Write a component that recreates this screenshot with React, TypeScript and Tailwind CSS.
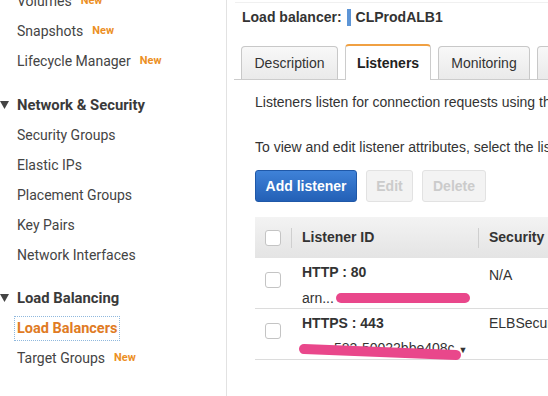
const side = "font-['Roboto','Liberation_Sans',sans-serif]";
const main = "font-['Liberation_Sans','Arial',sans-serif]";

const NewBadge = () => (
  <span className="ml-[9px] text-[11px] font-bold text-[#ec8f24]">New</span>
);

const SideItem = ({ label, isNew }: { label: string; isNew?: boolean }) => (
  <div className="flex h-[30px] items-center pl-[17px] text-[14px] text-[#444]">
    {label}
    {isNew && <NewBadge />}
  </div>
);

const SideHeader = ({ label, className }: { label: string; className?: string }) => (
  <div className={`flex h-[30px] items-center text-[14.8px] font-bold text-[#3a3a3a] ${className ?? ""}`}>
    <span className="w-[17px]">
      <svg width="9" height="8" viewBox="0 0 9 8">
        <path d="M0 0 H9 L4.5 8 Z" fill="#444" />
      </svg>
    </span>
    {label}
  </div>
);

const Checkbox = () => (
  <div className="h-[16px] w-[16px] rounded-[3px] border border-[#c4c4c4] bg-white" />
);

const Tab = ({ label, active, w }: { label: string; active?: boolean; w: string }) =>
  active ? (
    <div
      className={`${w} -mb-px flex h-[36px] items-center justify-center rounded-t-[4px] border border-b-0 border-[#ccc] border-t-2 border-t-[#f0a042] bg-white text-[14px] font-bold text-[#222]`}
    >
      {label}
    </div>
  ) : (
    <div
      className={`${w} flex h-[33px] shrink-0 items-center justify-center rounded-t-[4px] border border-b-0 border-[#c8c8c8] bg-gradient-to-b from-[#f8f8f8] to-[#eaeaea] text-[14px] text-[#333]`}
    >
      {label}
    </div>
  );

export default function App() {
  return (
    <div className="flex h-[396px] w-[548px] overflow-hidden bg-white">
      {/* sidebar */}
      <div className={`w-[227px] shrink-0 border-r border-[#e2e2e2] ${side}`}>
        <div className="-mt-[14px]">
          <SideItem label="Volumes" isNew />
          <SideItem label="Snapshots" isNew />
          <SideItem label="Lifecycle Manager" isNew />
          <SideHeader label="Network & Security" className="mt-[14px]" />
          <SideItem label="Security Groups" />
          <SideItem label="Elastic IPs" />
          <SideItem label="Placement Groups" />
          <SideItem label="Key Pairs" />
          <SideItem label="Network Interfaces" />
          <SideHeader label="Load Balancing" className="mt-[13px]" />
          <div className="flex h-[30px] items-center pl-[14px] pt-[1px]">
            <span className="border border-dotted border-[#8fb8dd] px-[2px] py-[1px] text-[14.5px] font-bold text-[#e07b24]">
              Load Balancers
            </span>
          </div>
          <SideItem label="Target Groups" isNew />
          <SideHeader label="Auto Scaling" className="mt-[14px]" />
        </div>
      </div>

      {/* main */}
      <div className={`min-w-0 flex-1 overflow-hidden whitespace-nowrap ${main}`}>
        <div className="ml-[8px] h-[3px] border-b border-[#f0f0f0]" />
        <div className="flex h-[28px] items-center pl-[15px] text-[14px] font-bold text-[#333]">
          Load balancer:
          <span className="ml-[5px] mr-[5px] h-[17px] w-[4px] bg-[#5d95d6]" />
          CLProdALB1
        </div>

        <div className="ml-[7px] mt-[13px] flex items-end gap-[7px] border-b border-[#ccc] pl-[7px]">
          <Tab label="Description" w="w-[97px] shrink-0" />
          <Tab label="Listeners" active w="w-[86px] shrink-0" />
          <Tab label="Monitoring" w="w-[92px] shrink-0" />
          <Tab label="Tags" w="w-[60px] shrink-0" />
        </div>

        <div className="pl-[28px] text-[14px] text-[#333]">
          <div className="mt-[12px] leading-[20px]">
            Listeners listen for connection requests using the protocol and port you configure.
          </div>
          <div className="mt-[25px] leading-[20px]">
            To view and edit listener attributes, select the listener.
          </div>

          <div className="mt-[13px] flex gap-[9px]">
            <div className="flex h-[32px] w-[102px] items-center justify-center rounded-[3px] border border-[#1f58a8] bg-gradient-to-b from-[#3f82d8] to-[#2360b6] font-bold text-white">
              Add listener
            </div>
            <div className="flex h-[32px] w-[47px] items-center justify-center rounded-[3px] border border-[#e2e2e2] bg-[#f3f3f3] font-bold text-[#cbcbcb]">
              Edit
            </div>
            <div className="flex h-[32px] w-[64px] items-center justify-center rounded-[3px] border border-[#e2e2e2] bg-[#f3f3f3] font-bold text-[#cbcbcb]">
              Delete
            </div>
          </div>

          {/* table */}
          <div className="mt-[15px] w-[400px]">
            <div className="grid h-[41px] grid-cols-[36px_187px_1fr] items-center bg-gradient-to-b from-[#f3f3f3] to-[#e4e4e4] font-bold text-[#333]">
              <div className="flex h-full items-center pl-[10px]">
                <Checkbox />
              </div>
              <div className="flex h-[20px] items-center border-l border-[#cfcfcf] pl-[10px]">Listener ID</div>
              <div className="flex h-[20px] items-center border-l border-[#cfcfcf] pl-[10px]">Security policy</div>
            </div>

            <div className="grid h-[51px] grid-cols-[36px_187px_1fr] border-b border-[#dcdcdc]">
              <div className="pl-[10px] pt-[14px]">
                <Checkbox />
              </div>
              <div className="pl-[11px] pt-[5px]">
                <div className="font-bold leading-[18px]">HTTP : 80</div>
                <div className="mt-[8px] flex items-center leading-[18px]">
                  arn...
                  <span className="ml-[2px] h-[10px] w-[134px] rounded-full bg-[#e9478b]" />
                </div>
              </div>
              <div className="pl-[11px] pt-[8px] leading-[18px]">N/A</div>
            </div>

            <div className="relative grid h-[51px] grid-cols-[36px_187px_1fr] border-b border-[#dcdcdc]">
              <div className="pl-[10px] pt-[14px]">
                <Checkbox />
              </div>
              <div className="pl-[11px] pt-[5px]">
                <div className="font-bold leading-[18px]">HTTPS : 443</div>
                <div className="mt-[7px] leading-[18px]">
                  arn...583-50022bbe408c <span className="text-[9px]">▼</span>
                </div>
              </div>
              <div className="pl-[11px] pt-[5px] leading-[18px]">ELBSecurityPolicy-2016-08</div>
              <svg className="absolute left-0 top-0" width="220" height="51" viewBox="0 0 220 51">
                <line x1="49" y1="40" x2="201" y2="46" stroke="#e9478b" strokeWidth="10" strokeLinecap="round" />
              </svg>
            </div>
          </div>
        </div>
      </div>
    </div>
  );
}
